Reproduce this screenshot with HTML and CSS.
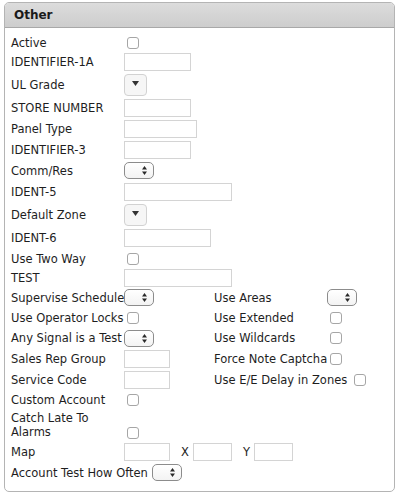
FILE: index.html
```html
<!DOCTYPE html>
<html lang="en">

<head>
  <meta charset="UTF-8" />
  <title>Other</title>
  <link rel="stylesheet" href="styles.css">
</head>

<body>

  <div class="panel">
    <div class="panel-head">Other</div>

    <div class="panel-body">
      <div class="row r18">
        <span class="lbl">Active</span><input type="checkbox" class="chk">
      </div>
      <div class="row r20">
        <span class="lbl">IDENTIFIER-1A</span><input type="text" class="txt w67">
      </div>
      <div class="row r25">
        <span class="lbl">UL Grade</span>
        <span class="drop"><svg width="7" height="5" viewBox="0 0 7 5"><polygon points="0,0 7,0 3.5,5" /></svg></span>
      </div>
      <div class="row">
        <span class="lbl">STORE NUMBER</span><input type="text" class="txt w67">
      </div>
      <div class="row">
        <span class="lbl">Panel Type</span><input type="text" class="txt w73">
      </div>
      <div class="row">
        <span class="lbl">IDENTIFIER-3</span><input type="text" class="txt w67">
      </div>
      <div class="row">
        <span class="lbl">Comm/Res</span>
        <span class="sel"><svg width="5" height="9" viewBox="0 0 5 9"><polygon points="0,3.6 2.5,0 5,3.6" /><polygon points="0,5.4 5,5.4 2.5,9" /></svg></span>
      </div>
      <div class="row">
        <span class="lbl">IDENT-5</span><input type="text" class="txt w108">
      </div>
      <div class="row r25">
        <span class="lbl">Default Zone</span>
        <span class="drop"><svg width="7" height="5" viewBox="0 0 7 5"><polygon points="0,0 7,0 3.5,5" /></svg></span>
      </div>
      <div class="row">
        <span class="lbl">IDENT-6</span><input type="text" class="txt w87">
      </div>
      <div class="row">
        <span class="lbl">Use Two Way</span><input type="checkbox" class="chk">
      </div>
      <div class="row r18">
        <span class="lbl">TEST</span><input type="text" class="txt w108">
      </div>

      <!-- two column part -->
      <div class="row">
        <div class="half">
          <span class="lbl">Supervise Schedule</span>
          <span class="sel"><svg width="5" height="9" viewBox="0 0 5 9"><polygon points="0,3.6 2.5,0 5,3.6" /><polygon points="0,5.4 5,5.4 2.5,9" /></svg></span>
        </div>
        <span class="lbl">Use Areas</span>
        <span class="sel"><svg width="5" height="9" viewBox="0 0 5 9"><polygon points="0,3.6 2.5,0 5,3.6" /><polygon points="0,5.4 5,5.4 2.5,9" /></svg></span>
      </div>
      <div class="row r20">
        <div class="half">
          <span class="lbl">Use Operator Locks</span><input type="checkbox" class="chk">
        </div>
        <span class="lbl">Use Extended</span><input type="checkbox" class="chk">
      </div>
      <div class="row r20">
        <div class="half">
          <span class="lbl">Any Signal is a Test</span>
          <span class="sel"><svg width="5" height="9" viewBox="0 0 5 9"><polygon points="0,3.6 2.5,0 5,3.6" /><polygon points="0,5.4 5,5.4 2.5,9" /></svg></span>
        </div>
        <span class="lbl">Use Wildcards</span><input type="checkbox" class="chk">
      </div>
      <div class="row">
        <div class="half">
          <span class="lbl">Sales Rep Group</span><input type="text" class="txt w46">
        </div>
        <span class="lbl">Force Note Captcha</span><input type="checkbox" class="chk">
      </div>
      <div class="row">
        <div class="half">
          <span class="lbl">Service Code</span><input type="text" class="txt w46">
        </div>
        <span class="lbl long">Use E/E Delay in Zones</span><input type="checkbox" class="chk">
      </div>

      <div class="row r20">
        <span class="lbl">Custom Account</span><input type="checkbox" class="chk">
      </div>
      <div class="row r31">
        <span class="lbl">Catch Late To<br>Alarms</span><input type="checkbox" class="chk">
      </div>
      <div class="row">
        <span class="lbl">Map</span><input type="text" class="txt w46">
        <span class="coord">X</span><input type="text" class="txt w39">
        <span class="coord">Y</span><input type="text" class="txt w39">
      </div>
      <div class="row">
        <span class="lbl long">Account Test How Often</span>
        <span class="sel"><svg width="5" height="9" viewBox="0 0 5 9"><polygon points="0,3.6 2.5,0 5,3.6" /><polygon points="0,5.4 5,5.4 2.5,9" /></svg></span>
      </div>
    </div>
  </div>

</body>

</html>
```
FILE: styles.css
```css
* {
  box-sizing: border-box;
}

body {
  font-family: "DejaVu Sans", Verdana, sans-serif;
  font-size: 11.5px;
  color: #1E1E1E;
  background: #FFFFFF;
  margin: 0;
  padding: 2px 0 0 4px;
}

.panel {
  width: 391px;
  height: 490px;
  border: 1px solid #B4B4B4;
  border-radius: 5px;
  overflow: hidden;
}

.panel-head {
  height: 25px;
  padding: 5px 0 0 9px;
  font-size: 12px;
  font-weight: bold;
  color: #1A1A1A;
  background: linear-gradient(to bottom, #DCDCDC, #CDCDCD);
  border-bottom: 1px solid #A8A8A8;
}

.panel-body {
  padding: 6px 0 0 6px;
}

.row {
  display: flex;
  align-items: center;
  height: 21px;
}

.r18 {
  height: 18px;
}

.r20 {
  height: 20px;
}

.r25 {
  height: 25px;
}

.r31 {
  height: 31px;
  align-items: flex-end;
  padding-bottom: 2px;
  line-height: 14px;
}

.half {
  display: flex;
  align-items: center;
  width: 203px;
  flex-shrink: 0;
}

.lbl {
  min-width: 113px;
  white-space: nowrap;
}

.lbl.long {
  padding-right: 4px;
}

.txt {
  height: 18px;
  margin: 0;
  padding: 0 3px;
  border: 1px solid #D4D4D4;
  border-radius: 0;
  background: #FFFFFF;
  font: inherit;
}

.w39 { width: 39px; }
.w46 { width: 46px; }
.w67 { width: 67px; }
.w73 { width: 73px; }
.w87 { width: 87px; }
.w108 { width: 108px; }

.chk {
  appearance: none;
  -webkit-appearance: none;
  width: 12px;
  height: 12px;
  margin: 0 0 0 3px;
  border: 1px solid #A6A6A6;
  border-radius: 3px;
  background: #FFFFFF;
}

.sel {
  display: flex;
  justify-content: flex-end;
  align-items: center;
  width: 30px;
  height: 17px;
  padding-right: 6px;
  border: 1px solid #8C8C8C;
  border-radius: 5px;
  background: linear-gradient(to bottom, #FFFFFF, #F3F3F3);
}

.sel svg polygon {
  fill: #2A2A2A;
}

.drop {
  display: flex;
  justify-content: center;
  align-items: flex-start;
  width: 23px;
  height: 22px;
  padding-top: 6px;
  border: 1px solid #D2D2D2;
  border-radius: 4px;
  background: #F6F6F6;
}

.drop svg polygon {
  fill: #333333;
}

.coord {
  margin: 0 4px 0 11px;
}
```
